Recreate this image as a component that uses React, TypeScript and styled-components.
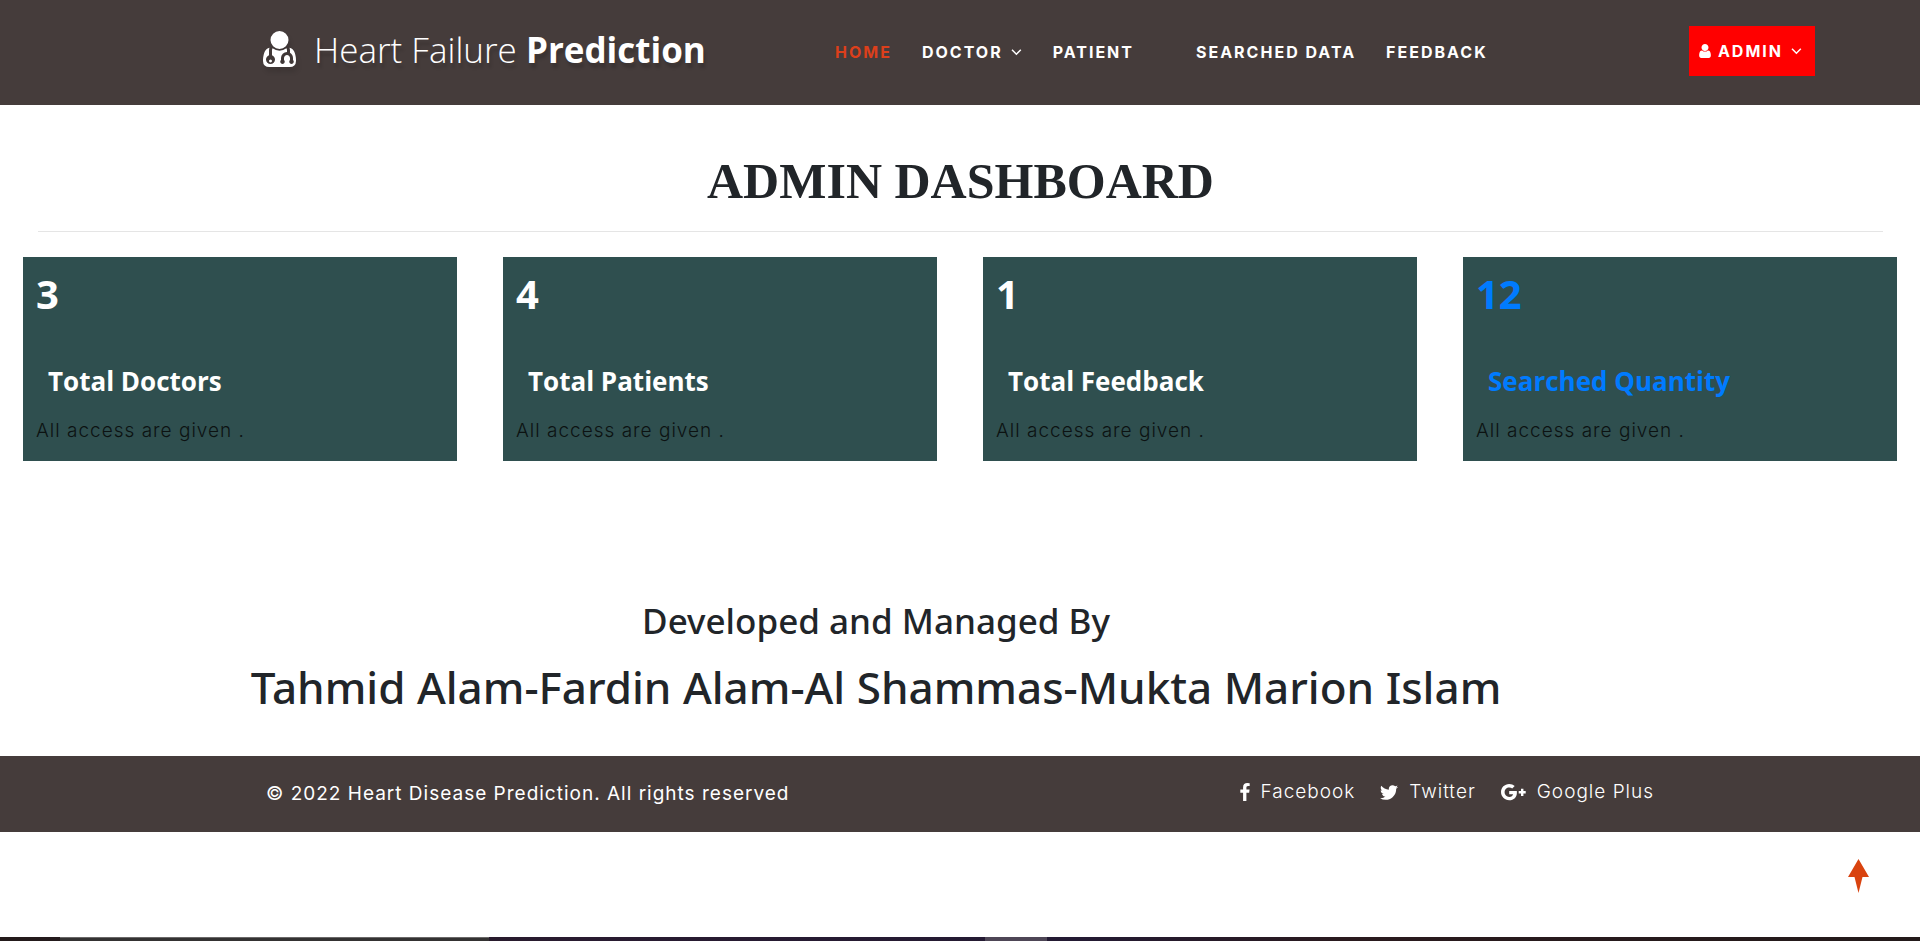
import React from 'react';
import styled, { createGlobalStyle } from 'styled-components';

const GlobalStyle = createGlobalStyle`
  * {
    box-sizing: border-box;
  }
  body {
    margin: 0;
    background: #fff;
    color: #212529;
    font-family: Inter, 'Liberation Sans', sans-serif;
    font-size: 19px;
    letter-spacing: 1px;
  }
  h1, h2, h3, p, ul {
    margin: 0;
    padding: 0;
  }
  ul {
    list-style: none;
  }
  a {
    color: inherit;
    text-decoration: none;
  }
`;

const Page = styled.div`
  display: flex;
  flex-direction: column;
  min-height: 100vh;
`;

const Header = styled.header`
  display: flex;
  align-items: flex-start;
  padding: 26px 105px 27px 263px;
  background: #453c3b;
  color: #fff;
`;

const Brand = styled.a`
  display: flex;
  align-items: flex-start;
  gap: 18px;
  width: 572px;
  flex-shrink: 0;
  font: 300 35px/48px 'Open Sans', 'Liberation Sans', sans-serif;
  letter-spacing: 0;
  white-space: nowrap;
  text-shadow: 2px 5px 3px rgba(0, 0, 0, 0.15);

  b {
    font-weight: 700;
  }
  svg {
    margin-top: 5px;
    filter: drop-shadow(2px 5px 2px rgba(0, 0, 0, 0.12));
  }
`;

const NavList = styled.ul`
  display: flex;
  gap: 30px;
  font-size: 16px;
  font-weight: 700;
  line-height: 52px;
  letter-spacing: 2px;
  white-space: nowrap;
`;

const NavItem = styled.li<{ $spaced?: boolean }>`
  margin-left: ${(p) => (p.$spaced ? '32px' : '0')};
`;

const NavLink = styled.a<{ $active?: boolean }>`
  display: flex;
  align-items: center;
  gap: 7px;
  color: ${(p) => (p.$active ? '#dc3f1b' : 'inherit')};
`;

const AdminButton = styled.button`
  display: flex;
  align-items: center;
  gap: 7px;
  margin-left: auto;
  padding: 0 12px 0 10px;
  border: 0;
  background: #f00;
  color: #fff;
  font: 700 16px/50px Inter, 'Liberation Sans', sans-serif;
  letter-spacing: 2px;
`;

const Main = styled.main`
  padding-bottom: 41px;
`;

const Title = styled.h1`
  margin: 0 37px 25px 38px;
  padding: 48px 0 22px;
  border-bottom: 1px solid #e5e5e5;
  font: 700 50px/56px 'Liberation Serif', serif;
  letter-spacing: 0;
  text-align: center;
`;

const CardGrid = styled.section`
  display: grid;
  grid-template-columns: repeat(4, 1fr);
  gap: 46px;
  padding: 0 23px;
`;

const Card = styled.a<{ $accent?: boolean }>`
  display: block;
  padding: 12px 13px 16px;
  background: #2f4f4f;
  color: ${(p) => (p.$accent ? '#007bff' : '#fff')};
`;

const Count = styled.h2`
  font: 700 40px/50px 'Open Sans', 'Liberation Sans', sans-serif;
  letter-spacing: 0;
`;

const CardLabel = styled.h3`
  margin: 42px 0 16px;
  padding-left: 12px;
  font: 700 26px/40px 'Open Sans', 'Liberation Sans', sans-serif;
  letter-spacing: 0;
`;

const CardNote = styled.p`
  color: #0c1212;
  font-weight: 300;
  line-height: 28px;
`;

const Credits = styled.section`
  display: flex;
  flex-direction: column;
  align-items: center;
  gap: 14px;
  padding: 136px 168px 0 0;
  font-family: 'Noto Sans', 'Liberation Sans', sans-serif;
  letter-spacing: 0;
`;

const CreditsLead = styled.h2`
  font-size: 35px;
  font-weight: 500;
  line-height: 48px;
`;

const CreditsNames = styled.h1`
  font-size: 44px;
  font-weight: 500;
  line-height: 56px;
`;

const Footer = styled.footer`
  display: flex;
  justify-content: space-between;
  padding: 21px 266px 23px;
  background: #453c3b;
  color: #fff;
  line-height: 30px;
`;

const Copyright = styled.p`
  padding-top: 2px;
  font-weight: 400;
`;

const SocialList = styled.ul`
  display: flex;
  gap: 25px;
  font-weight: 300;
`;

const SocialLink = styled.a`
  display: flex;
  align-items: center;
  gap: 11px;
`;

const BackToTop = styled.a`
  align-self: flex-end;
  margin: 27px 51px 44px 0;
  line-height: 0;
`;

const BottomBar = styled.div`
  display: grid;
  grid-template-columns: 60px 429px 496px 62px 1fr;
  height: 4px;
  margin-top: auto;
  background: linear-gradient(90deg, #231a1a, #291b30 30%, #231a33 56%, #2a1a1e 70%, #231a1a);
`;

const BarSegment = styled.span<{ $tone: string; $edge?: string }>`
  border-top: 1px solid ${(p) => p.$edge ?? p.$tone};
  background: ${(p) => p.$tone};
`;

const Glyph = ({ box, d, width, height }: { box: string; d: string; width: number; height: number }) => (
  <svg viewBox={box} width={width} height={height} fill="currentColor" aria-hidden="true">
    <path d={d} />
  </svg>
);

const Chevron = () => (
  <svg width="13" height="10" viewBox="0 0 13 10" fill="none" stroke="currentColor" strokeWidth="1.5" aria-hidden="true">
    <path d="M2 2.8l4.4 4.4 4.4-4.4" />
  </svg>
);

const doctorPath =
  'M384 1408q0 26-19 45t-45 19-45-19-19-45 19-45 45-19 45 19 19 45zm1024-3q0 121-73 190t-194 69h-874q-121 0-194-69t-73-190q0-68 5.500-131t24-138 47.500-132.500 81-103 120-60.500q-22 52-22 120v203q-58 20-93 70t-35 111q0 80 56 136t136 56 136-56 56-136q0-61-35.500-111t-92.500-70v-203q0-62 25-93 132 104 295 104t295-104q25 31 25 93v64q-106 0-181 75t-75 181v89q-32 29-32 71 0 40 28 68t68 28 68-28 28-68q0-42-32-71v-89q0-52 38-90t90-38 90 38 38 90v89q-32 29-32 71 0 40 28 68t68 28 68-28 28-68q0-42-32-71v-89q0-68-34.500-127.500t-93.500-93.500q0-10 .5-42.500t0-48-2.500-41.500-7-47-13-40q68 15 120 60.500t81 103 47.500 132.500 24 138 5.500 131zm-320-893q0 159-112.500 271.500t-271.500 112.500-271.500-112.500-112.500-271.500 112.500-271.500 271.500-112.500 271.500 112.500 112.500 271.500z';
const userPath =
  'M1536 1399q0 109-62.500 187t-150.500 78h-854q-88 0-150.500-78t-62.500-187q0-85 8.500-160.500t31.500-152 58.500-131 94-89 134.500-34.500q131 128 313 128t313-128q76 0 134.500 34.500t94 89 58.500 131 31.500 152 8.500 160.500zm-256-887q0 159-112.500 271.500t-271.500 112.500-271.500-112.500-112.500-271.500 112.500-271.500 271.500-112.500 271.500 112.500 112.500 271.500z';
const facebookPath =
  'M1343 12v264h-157q-86 0-116 36t-30 108v189h293l-39 296h-254v759h-306v-759h-255v-296h255v-218q0-186 104-288.500t277-102.500q147 0 228 12z';
const twitterPath =
  'M1684 408q-67 98-162 167 1 14 1 42 0 130-38 259.500t-115.500 248.500-184.500 210.500-258 146-323 54.500q-271 0-496-145 35 4 78 4 225 0 401-138-105-2-188-64.500t-114-159.500q33 5 61 5 43 0 85-11-112-23-185.500-111.500t-73.500-205.500v-4q68 38 146 41-66-44-105-115t-39-154q0-88 44-163 121 149 294.500 238.500t371.500 99.500q-8-38-8-74 0-134 94.500-228.500t228.500-94.500q140 0 236 102 109-21 205-78-37 115-142 178 93-10 186-50z';
const googlePath =
  'M10.200 1c2.200 0 4.100.8 5.500 2.100l-2.500 2.500c-.7-.6-1.700-1-3-1-2.500 0-4.600 2.100-4.600 4.600s2.100 4.700 4.600 4.700c2.200 0 3.500-1.200 3.900-2.700h-3.900V7.900h7.600c.1.500.1 1 .1 1.500 0 4.600-3 7.800-7.700 7.800-4.600 0-8.200-3.600-8.200-8.100S5.600 1 10.200 1zM22 5.800h2.400v2.300h2.300v2.500h-2.300v2.300H22v-2.300h-2.300V8.100H22z';

const cards = [
  { count: 3, label: 'Total Doctors' },
  { count: 4, label: 'Total Patients' },
  { count: 1, label: 'Total Feedback' },
  { count: 12, label: 'Searched Quantity', accent: true },
];

const navItems = [
  { label: 'HOME', active: true },
  { label: 'DOCTOR', menu: true },
  { label: 'PATIENT' },
  { label: 'SEARCHED DATA', spaced: true },
  { label: 'FEEDBACK' },
];

export default function App() {
  return (
    <Page>
      <GlobalStyle />
      <Header>
        <Brand href="#">
          <Glyph box="0 128 1408 1536" d={doctorPath} width={33} height={36} />
          <span>
            Heart Failure <b>Prediction</b>
          </span>
        </Brand>
        <nav>
          <NavList>
            {navItems.map((item) => (
              <NavItem key={item.label} $spaced={item.spaced}>
                <NavLink href="#" $active={item.active}>
                  {item.label}
                  {item.menu && <Chevron />}
                </NavLink>
              </NavItem>
            ))}
          </NavList>
        </nav>
        <AdminButton type="button">
          <Glyph box="256 128 1280 1536" d={userPath} width={12} height={14} />
          ADMIN
          <Chevron />
        </AdminButton>
      </Header>

      <Main>
        <Title>ADMIN DASHBOARD</Title>
        <CardGrid>
          {cards.map((card) => (
            <Card key={card.label} href="#" $accent={card.accent}>
              <Count>{card.count}</Count>
              <CardLabel>{card.label}</CardLabel>
              <CardNote>All access are given .</CardNote>
            </Card>
          ))}
        </CardGrid>
        <Credits>
          <CreditsLead>Developed and Managed By</CreditsLead>
          <CreditsNames>Tahmid Alam-Fardin Alam-Al Shammas-Mukta Marion Islam</CreditsNames>
        </Credits>
      </Main>

      <Footer>
        <Copyright>© 2022 Heart Disease Prediction. All rights reserved</Copyright>
        <SocialList>
          <li>
            <SocialLink href="#">
              <Glyph box="479 0 864 1664" d={facebookPath} width={10} height={18} />
              Facebook
            </SocialLink>
          </li>
          <li>
            <SocialLink href="#">
              <Glyph box="108 256 1576 1280" d={twitterPath} width={18} height={15} />
              Twitter
            </SocialLink>
          </li>
          <li>
            <SocialLink href="#">
              <Glyph box="2 1 25 17" d={googlePath} width={25} height={17} />
              Google Plus
            </SocialLink>
          </li>
        </SocialList>
      </Footer>

      <BackToTop href="#" aria-label="Back to top">
        <svg width="21" height="34" viewBox="0 0 21 34" fill="#d9430f" aria-hidden="true">
          <path d="M10.500 0L21 18h-6.500l-4 16-4-16H0z" />
        </svg>
      </BackToTop>
      <BottomBar>
        <BarSegment $tone="transparent" />
        <BarSegment $tone="#343232" $edge="#6a6868" />
        <BarSegment $tone="transparent" />
        <BarSegment $tone="#4e4656" />
      </BottomBar>
    </Page>
  );
}
